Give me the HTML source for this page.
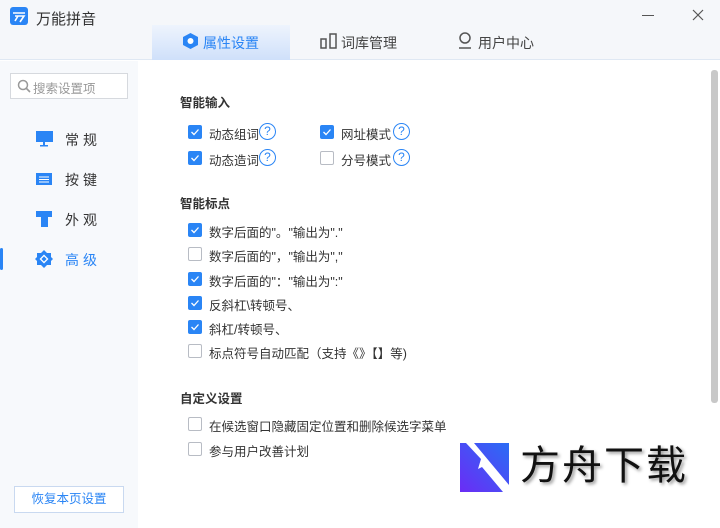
<!DOCTYPE html><html><head><meta charset="utf-8"><style>
*{margin:0;padding:0;box-sizing:border-box}
body{width:720px;height:528px;overflow:hidden;background:#fff;font-family:"Liberation Sans","Noto Sans CJK SC",sans-serif;font-size:13px;color:#333;position:relative}
.hdr{position:absolute;left:0;top:0;width:720px;height:60px;background:#f5f7fa;border-bottom:1px solid #dfe8f3}
.side{position:absolute;left:0;top:61px;width:138px;height:467px;background:#f7f9fc}
.abs{position:absolute}
.cb{position:absolute;width:14px;height:14px;border-radius:2px;background:#2a85f5}
.cb.off{background:#fff;border:1px solid #b8bcc4}
.cb svg{position:absolute;left:2px;top:2px}
.lbl{position:absolute;font-size:12.5px;color:#333;white-space:nowrap}
.q{position:absolute;width:17px;height:17px;border:1.5px solid #2a85f5;border-radius:50%;color:#2a85f5;font-size:12px;text-align:center;line-height:14px}
.sec{position:absolute;font-size:12.5px;font-weight:bold;color:#333}
.nav{position:absolute;left:65px;font-size:14px;letter-spacing:4px;color:#333}
</style></head><body>
<div class="hdr"></div>
<div class="abs" style="left:10px;top:7px;width:18px;height:18px;background:#2a85f5;border-radius:3px"><svg width="18" height="18"><path d="M3 6h12M5 9h9l-4 6M8 9l-3 5" stroke="#fff" stroke-width="1.6" fill="none"/></svg></div>
<div class="abs" style="left:36px;top:8px;font-size:15px;color:#333">万能拼音</div>
<div class="abs" style="left:642px;top:8px;width:12px;height:1px;background:#555;top:15px"></div>
<svg class="abs" style="left:692px;top:9px" width="12" height="12"><path d="M1 1L11 11M11 1L1 11" stroke="#555" stroke-width="1.2"/></svg>
<div class="abs" style="left:152px;top:25px;width:138px;height:35px;background:linear-gradient(#eef4fd,#cfe0fa)"></div>
<svg class="abs" style="left:182px;top:32px" width="17" height="18"><path d="M8.5 1L16 5v8l-7.5 4L1 13V5z" fill="#2a85f5"/><circle cx="8.5" cy="9" r="3" fill="#fff"/></svg>
<div class="abs" style="left:203px;top:33px;font-size:14px;color:#2a85f5">属性设置</div>
<svg class="abs" style="left:320px;top:33px" width="18" height="16"><rect x="1" y="6" width="5" height="9" fill="none" stroke="#555" stroke-width="1.5"/><rect x="10" y="1" width="6" height="14" fill="none" stroke="#555" stroke-width="1.5"/></svg>
<div class="abs" style="left:341px;top:33px;font-size:14px;color:#444">词库管理</div>
<svg class="abs" style="left:457px;top:32px" width="16" height="18"><circle cx="8" cy="6" r="5" fill="none" stroke="#555" stroke-width="1.5"/><path d="M2 16h12" stroke="#555" stroke-width="1.5"/></svg>
<div class="abs" style="left:478px;top:33px;font-size:14px;color:#444">用户中心</div>
<div class="side"></div>
<div class="abs" style="left:10px;top:73px;width:118px;height:26px;border:1px solid #d6d9de;background:#fff"></div>
<svg class="abs" style="left:17px;top:79px" width="14" height="14"><circle cx="6" cy="6" r="4.5" fill="none" stroke="#999" stroke-width="1.5"/><path d="M9 9l4 4" stroke="#999" stroke-width="1.6"/></svg>
<div class="abs" style="left:33px;top:78px;font-size:12.5px;color:#999">搜索设置项</div>
<svg class="abs" style="left:36px;top:131px" width="17" height="16"><rect x="0" y="0" width="17" height="11" fill="#2a85f5"/><rect x="7" y="11" width="2" height="3" fill="#2a85f5"/><rect x="4" y="14" width="8" height="1.5" fill="#2a85f5"/></svg>
<div class="nav" style="top:130px">常规</div>
<svg class="abs" style="left:36px;top:173px" width="16" height="12"><rect width="16" height="12" fill="#2a85f5"/><path d="M3 4h10M3 6.5h10M3 9h10" stroke="#fff" stroke-width=".9"/></svg>
<div class="nav" style="top:170px">按键</div>
<svg class="abs" style="left:36px;top:211px" width="16" height="16"><path d="M0 0h16v6h-4v10H5V6H0z" fill="#2a85f5"/></svg>
<div class="nav" style="top:210px">外观</div>
<div class="abs" style="left:0;top:248px;width:3px;height:22px;background:#2a85f5;border-radius:2px"></div>
<svg class="abs" style="left:35px;top:250px" width="18" height="18"><path d="M9 0l3 3h4v4l2 2-2 2v4h-4l-3 3-3-3H2v-4L0 9l2-2V3h4z" fill="#2a85f5"/><rect x="6.5" y="6.5" width="5" height="5" transform="rotate(45 9 9)" fill="none" stroke="#fff" stroke-width="1.3"/></svg>
<div class="nav" style="top:250px;color:#2a85f5">高级</div>
<div class="abs" style="left:14px;top:486px;width:110px;height:27px;border:1px solid #c9d9f0;background:#fff;font-size:12.5px;color:#2a85f5;text-align:center;line-height:25px">恢复本页设置</div>
<div class="abs" style="left:711px;top:70px;width:7px;height:333px;background:#c8c8c8;border-radius:3px"></div>

<div class="sec" style="left:180px;top:92px">智能输入</div>
<div class="cb" style="left:188px;top:125px"><svg width="10" height="10"><path d="M1.5 5l2.5 2.5L8.5 2.5" stroke="#fff" stroke-width="1.3" fill="none"/></svg></div><div class="lbl" style="left:209px;top:124px">动态组词</div><div class="q" style="left:259px;top:123px">?</div>
<div class="cb" style="left:320px;top:125px"><svg width="10" height="10"><path d="M1.5 5l2.5 2.5L8.5 2.5" stroke="#fff" stroke-width="1.3" fill="none"/></svg></div><div class="lbl" style="left:341px;top:124px">网址模式</div><div class="q" style="left:393px;top:123px">?</div>
<div class="cb" style="left:188px;top:151px"><svg width="10" height="10"><path d="M1.5 5l2.5 2.5L8.5 2.5" stroke="#fff" stroke-width="1.3" fill="none"/></svg></div><div class="lbl" style="left:209px;top:150px">动态造词</div><div class="q" style="left:259px;top:149px">?</div>
<div class="cb off" style="left:320px;top:151px"></div><div class="lbl" style="left:341px;top:150px">分号模式</div><div class="q" style="left:393px;top:149px">?</div>

<div class="sec" style="left:180px;top:193px">智能标点</div>
<div class="cb" style="left:188px;top:223px"><svg width="10" height="10"><path d="M1.5 5l2.5 2.5L8.5 2.5" stroke="#fff" stroke-width="1.3" fill="none"/></svg></div><div class="lbl" style="left:209px;top:222px">数字后面的"。"输出为"."</div>
<div class="cb off" style="left:188px;top:247px"></div><div class="lbl" style="left:209px;top:246px">数字后面的"，"输出为","</div>
<div class="cb" style="left:188px;top:272px"><svg width="10" height="10"><path d="M1.5 5l2.5 2.5L8.5 2.5" stroke="#fff" stroke-width="1.3" fill="none"/></svg></div><div class="lbl" style="left:209px;top:271px">数字后面的"："输出为":"</div>
<div class="cb" style="left:188px;top:296px"><svg width="10" height="10"><path d="M1.5 5l2.5 2.5L8.5 2.5" stroke="#fff" stroke-width="1.3" fill="none"/></svg></div><div class="lbl" style="left:209px;top:295px">反斜杠\转顿号、</div>
<div class="cb" style="left:188px;top:320px"><svg width="10" height="10"><path d="M1.5 5l2.5 2.5L8.5 2.5" stroke="#fff" stroke-width="1.3" fill="none"/></svg></div><div class="lbl" style="left:209px;top:319px">斜杠/转顿号、</div>
<div class="cb off" style="left:188px;top:344px"></div><div class="lbl" style="left:209px;top:343px">标点符号自动匹配（支持《》【】等)</div>

<div class="sec" style="left:180px;top:388px">自定义设置</div>
<div class="cb off" style="left:188px;top:417px"></div><div class="lbl" style="left:209px;top:416px">在候选窗口隐藏固定位置和删除候选字菜单</div>
<div class="cb off" style="left:188px;top:442px"></div><div class="lbl" style="left:209px;top:441px">参与用户改善计划</div>

<svg class="abs" style="left:460px;top:443px" width="49" height="49"><defs><linearGradient id="g" x1="0" y1="1" x2="1" y2="0"><stop offset="0" stop-color="#6b2cf5"/><stop offset="1" stop-color="#2a6df5"/></linearGradient></defs><rect width="49" height="49" fill="url(#g)"/><path d="M6 0h8l35 42v7h-6L22 24l-4 2 3-10z" fill="#fff"/></svg>
<div class="abs" style="left:520px;top:441px;font-size:40px;color:#111;letter-spacing:2px;line-height:50px;text-shadow:2px 2px 3px #999">方舟下载</div>
</body></html>
